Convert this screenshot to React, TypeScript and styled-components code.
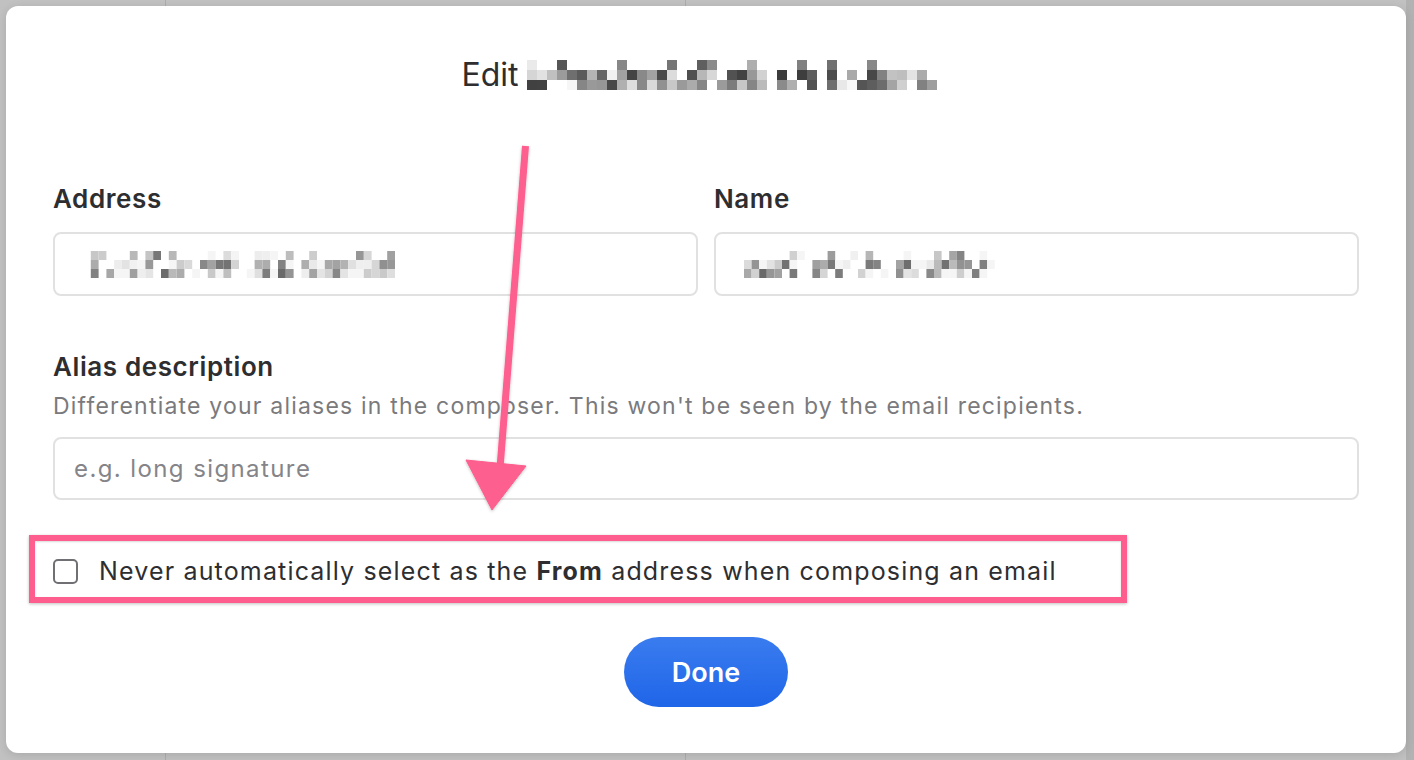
import React from 'react';
import styled, { createGlobalStyle } from 'styled-components';

const GlobalStyle = createGlobalStyle`
  html, body {
    margin: 0;
    padding: 0;
    height: 100%;
  }
  body {
    font-family: Inter, "Liberation Sans", sans-serif;
    background: #c1c1c1;
    -webkit-font-smoothing: antialiased;
  }
  * {
    box-sizing: border-box;
  }
`;

const PINK = '#fd5e8e';

// deterministic grey cells standing in for the blurred-out personal data
function makeCells(seed: number, cols: number, rows: number) {
  let s = seed;
  const rand = () => {
    s = (s * 9301 + 49297) % 233280;
    return s / 233280;
  };
  const cells: { x: number; y: number; shade: number }[] = [];
  for (let r = 0; r < rows; r++) {
    for (let c = 0; c < cols; c++) {
      const v = rand();
      if (r === 0 && v < 0.7) continue;
      if (v < 0.25) continue;
      cells.push({ x: c, y: r, shade: Math.floor(60 + rand() * 190) });
    }
  }
  return cells;
}

interface MosaicProps {
  seed: number;
  cols: number;
  rows: number;
  cell: number;
  cellH?: number;
  light?: boolean;
}

const Mosaic = ({ seed, cols, rows, cell, cellH, light }: MosaicProps) => {
  const h = cellH ?? cell;
  const cells = makeCells(seed, cols, rows);
  return (
    <MosaicSvg width={cols * cell} height={rows * h}>
      {cells.map((c, i) => {
        const g = light ? Math.min(245, c.shade + 40) : c.shade;
        return (
          <rect
            key={i}
            x={c.x * cell}
            y={c.y * h}
            width={cell}
            height={h}
            fill={`rgb(${g},${g},${g})`}
          />
        );
      })}
    </MosaicSvg>
  );
};

export default function App() {
  return (
    <>
      <GlobalStyle />
      <Backdrop>
        <Modal>
          <Title>
            Edit
            <Mosaic seed={17} cols={41} rows={3} cell={10} />
          </Title>

          <Row>
            <Field>
              <Label>Address</Label>
              <Input>
                <Mosaic seed={5} cols={40} rows={3} cell={7.8} cellH={9} light />
              </Input>
            </Field>
            <Field>
              <Label>Name</Label>
              <Input>
                <Mosaic seed={31} cols={33} rows={3} cell={7.6} cellH={9} light />
              </Input>
            </Field>
          </Row>

          <AliasField>
            <Label>Alias description</Label>
            <Hint>Differentiate your aliases in the composer. This won't be seen by the email recipients.</Hint>
            <Input>
              <Placeholder>e.g. long signature</Placeholder>
            </Input>
          </AliasField>

          <CheckRow>
            <CheckBox />
            <CheckText>
              Never automatically select as the <strong>From</strong> address when composing an email
            </CheckText>
          </CheckRow>

          <Footer>
            <DoneButton>Done</DoneButton>
          </Footer>

          <Highlight />
          <ArrowLayer width="1400" height="747" viewBox="0 0 1400 747">
            <defs>
              <filter id="sh" x="-20%" y="-20%" width="140%" height="140%">
                <feDropShadow dx="0" dy="1" stdDeviation="1.5" floodColor="#000" floodOpacity="0.25" />
              </filter>
            </defs>
            <g filter="url(#sh)" fill={PINK} stroke={PINK}>
              <line x1="519.5" y1="140" x2="494" y2="462" strokeWidth="7" />
              <polygon points="460,454 520,460 486,504" strokeWidth="1" strokeLinejoin="round" />
            </g>
          </ArrowLayer>
        </Modal>
      </Backdrop>
    </>
  );
}

const Backdrop = styled.div`
  height: 760px;
  padding: 6px 8px 7px 6px;
  background-color: #c1c1c1;
  background-image: linear-gradient(#adadad, #adadad), linear-gradient(#adadad, #adadad),
    linear-gradient(#b2b2b2, #b2b2b2);
  background-size: 1px 100%, 1px 100%, 8px 100%;
  background-position: 165px 0, 685px 0, 1406px 0;
  background-repeat: no-repeat;
`;

const Modal = styled.div`
  position: relative;
  width: 1400px;
  height: 747px;
  background: #fff;
  border-radius: 12px;
  box-shadow: 0 2px 10px rgba(0, 0, 0, 0.12);
  padding: 49px 47px 46px 47px;
  display: flex;
  flex-direction: column;
`;

const MosaicSvg = styled.svg`
  display: block;
  flex-shrink: 0;
`;

const Title = styled.h1`
  margin: 0;
  display: flex;
  align-items: center;
  justify-content: center;
  gap: 8px;
  height: 40px;
  font-size: 32px;
  font-weight: 400;
  color: #2e2e31;
  padding-right: 14px;
`;

const Row = styled.div`
  display: grid;
  grid-template-columns: 1fr 1fr;
  gap: 16px;
  margin-top: 89px;
`;

const Field = styled.div`
  display: flex;
  flex-direction: column;
`;

const AliasField = styled(Field)`
  margin-top: 55px;
`;

const Label = styled.div`
  font-size: 26px;
  line-height: 32px;
  font-weight: 600;
  letter-spacing: 0.6px;
  color: #2e2e31;
  margin-bottom: 17px;
  ${AliasField} & {
    margin-bottom: 8px;
  }
`;

const Hint = styled.div`
  font-size: 23px;
  line-height: 30px;
  letter-spacing: 1.2px;
  color: #7a7a7d;
  margin-bottom: 16px;
`;

const Input = styled.div`
  height: 64px;
  border: 2px solid #e1e1e1;
  border-radius: 8px;
  display: flex;
  align-items: center;
  padding: 0 20px 0 28px;
  ${AliasField} & {
    height: 63px;
    padding-left: 19px;
  }
`;

const Placeholder = styled.span`
  font-size: 24px;
  letter-spacing: 1.4px;
  color: #858589;
`;

const CheckRow = styled.label`
  display: flex;
  align-items: center;
  gap: 21px;
  height: 32px;
  margin-top: 55px;
`;

const CheckBox = styled.span`
  width: 25px;
  height: 25px;
  border: 2px solid #707074;
  border-radius: 5px;
  background: #fff;
  flex-shrink: 0;
`;

const CheckText = styled.span`
  font-size: 25px;
  letter-spacing: 1.16px;
  color: #2e2e31;
  strong {
    font-weight: 700;
  }
`;

const Footer = styled.div`
  display: flex;
  justify-content: center;
  margin-top: 50px;
  padding-left: 0;
`;

const DoneButton = styled.button`
  width: 164px;
  height: 70px;
  border: none;
  border-radius: 35px;
  background: linear-gradient(#3a7cef, #1f65e8);
  color: #fff;
  font-family: inherit;
  font-size: 27px;
  font-weight: 600;
  cursor: pointer;
`;

const Highlight = styled.div`
  position: absolute;
  left: 23px;
  top: 529px;
  width: 1098px;
  height: 68px;
  border: 6px solid ${PINK};
  box-shadow: 0 1px 3px rgba(0, 0, 0, 0.25), inset 0 1px 2px rgba(0, 0, 0, 0.15);
  pointer-events: none;
`;

const ArrowLayer = styled.svg`
  position: absolute;
  left: 0;
  top: 0;
  pointer-events: none;
`;
